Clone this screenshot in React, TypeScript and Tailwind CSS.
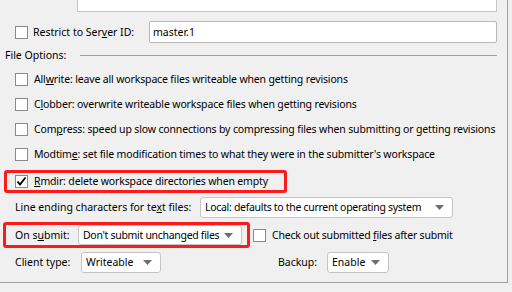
import React from "react";

const font = { fontFamily: '"Noto Sans", "Liberation Sans", sans-serif' };

function Box({ checked = false }: { checked?: boolean }) {
  return (
    <div className="w-[13px] h-[13px] shrink-0 border border-[#8a8a8a] bg-white flex items-center justify-center">
      {checked && (
        <svg width="11" height="11" viewBox="0 0 11 11">
          <path d="M1.5 5.5 L4 8.5 L9.5 1.5" fill="none" stroke="#000" strokeWidth="1.8" />
        </svg>
      )}
    </div>
  );
}

function Arrow() {
  return (
    <svg width="9" height="5" viewBox="0 0 9 5" className="shrink-0">
      <path d="M0 0 L9 0 L4.5 5 Z" fill="#6e6e6e" />
    </svg>
  );
}

function Drop({ text, w, h = 21, tight = false }: { text: string; w: string; h?: number; tight?: boolean }) {
  return (
    <div
      className={`${w} ${h === 21 ? "h-[21px]" : "h-[20px]"} shrink-0 bg-white border border-[#c4c4c4] rounded-[3px] flex items-center pl-[4px] pr-[8px] justify-between`}
    >
      <span className={`whitespace-nowrap ${tight ? "tracking-[-0.3px]" : ""}`}>{text}</span>
      <Arrow />
    </div>
  );
}

function CheckRow({ children, checked = false }: { children: React.ReactNode; checked?: boolean }) {
  return (
    <div className="h-[25px] flex items-center pl-[15px] shrink-0">
      <Box checked={checked} />
      <span className="ml-[6px] whitespace-nowrap tracking-[-0.15px]">{children}</span>
    </div>
  );
}

export default function App() {
  return (
    <div className="w-[512px] h-[292px] bg-[#f0f0f0] overflow-hidden text-[10.5px] leading-none text-black" style={font}>
      <div className="w-[508px] h-[283px] border-r border-b border-[#a0a0a0] flex flex-col">
        <div className="ml-[77px] w-[420px] h-[12px] border-x border-b border-[#c4c4c4] bg-white shrink-0" />
        <div className="mt-[9px] h-[22px] flex items-center shrink-0">
          <div className="w-[149px] flex items-center pl-[15px]">
            <Box />
            <span className="ml-[5px] whitespace-nowrap">
              Restrict to Ser<u>v</u>er ID:
            </span>
          </div>
          <div className="w-[348px] h-[22px] bg-white border border-[#b8b8b8] rounded-[2px] flex items-center pl-[3px]">
            master.1
          </div>
        </div>
        <div className="mt-[5px] h-[14px] flex items-center shrink-0">
          <div className="w-[80px] pl-[5px] whitespace-nowrap">File Options:</div>
          <div className="w-[417px] h-px bg-[#a0a0a0]" />
        </div>
        <div className="mt-[5px]" />
        <CheckRow>
          All<u>w</u>rite: leave all workspace files writeable when getting revisions
        </CheckRow>
        <CheckRow>
          C<u>l</u>obber: overwrite writeable workspace files when getting revisions
        </CheckRow>
        <CheckRow>
          Com<u>p</u>ress: speed up slow connections by compressing files when submitting or getting revisions
        </CheckRow>
        <CheckRow>
          Modtim<u>e</u>: set file modification times to what they were in the submitter's workspace
        </CheckRow>
        <div className="mt-[3px] ml-[4px] w-[283px] h-[23px] border-[3px] border-[#ff1a1a] rounded-[3px] flex items-center pl-[8px] shrink-0">
          <Box checked />
          <span className="ml-[6px] whitespace-nowrap tracking-[-0.15px]">
            <u>R</u>mdir: delete workspace directories when empty
          </span>
        </div>
        <div className="mt-[4px] h-[21px] flex items-center shrink-0">
          <div className="w-[200px] pl-[15px] whitespace-nowrap">
            Line ending characters for te<u>x</u>t files:
          </div>
          <Drop text="Local: defaults to the current operating system" w="w-[253px]" tight />
        </div>
        <div className="mt-[4px] flex items-center shrink-0">
          <div className="ml-[3px] w-[247px] h-[26px] border-[3px] border-[#ff1a1a] rounded-[3px] flex items-center shrink-0">
            <div className="w-[72px] pl-[9px] whitespace-nowrap">
              On s<u>u</u>bmit:
            </div>
            <Drop text="Don't submit unchanged files" w="w-[164px]" h={20} tight />
          </div>
          <div className="ml-[3px]">
            <Box />
          </div>
          <span className="ml-[6px] whitespace-nowrap tracking-[-0.2px]">
            Check out submitted <u>f</u>iles after submit
          </span>
        </div>
        <div className="mt-[4px] h-[21px] flex items-center shrink-0">
          <div className="w-[81px] pl-[15px] whitespace-nowrap">Client type:</div>
          <Drop text="Writeable" w="w-[80px]" />
          <div className="ml-[117px] w-[49px] whitespace-nowrap">Backup:</div>
          <Drop text="Enable" w="w-[62px]" />
        </div>
      </div>
    </div>
  );
}
